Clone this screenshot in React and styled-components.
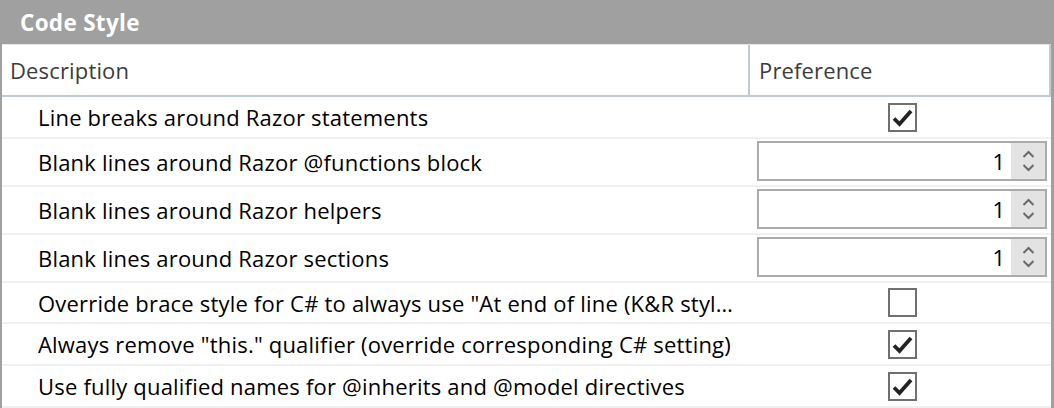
import React from "react";
import styled, { createGlobalStyle } from "styled-components";

const Global = createGlobalStyle`
  html, body { margin: 0; padding: 0; background: #ffffff; }
  body { width: 1054px; height: 408px; overflow: hidden; font-family: "Open Sans", "Noto Sans", sans-serif; }
`;

const Panel = styled.div`
  width: 1054px;
  height: 408px;
  box-sizing: border-box;
  background: #a0a0a0;
  padding: 0 3px 0 2px;
  display: flex;
  flex-direction: column;
  overflow: hidden;
`;

const TitleBar = styled.div`
  height: 44px;
  flex: none;
  display: flex;
  align-items: center;
  padding-left: 18px;
  color: #ffffff;
  font-weight: 700;
  font-size: 22.5px;
  letter-spacing: 0.3px;
`;

const Grid = styled.div`
  flex: 1;
  background: #ffffff;
  display: flex;
  flex-direction: column;
`;

const HeaderRow = styled.div`
  display: grid;
  grid-template-columns: 748px 1fr;
  height: 53px;
  box-sizing: border-box;
  border-top: 1px solid #e6e6e6;
  border-bottom: 2px solid #bfccd4;
  border-right: 2px solid #bfccd4;
`;

const HeaderCell = styled.div`
  display: flex;
  align-items: center;
  padding-left: ${(p) => p.$pad}px;
  color: #3c3c3c;
  font-size: 22px;
  letter-spacing: 0.15px;
  border-right: ${(p) => (p.$divider ? "2px solid #bfccd4" : "none")};
`;

const Row = styled.div`
  display: grid;
  grid-template-columns: 750px 1fr;
  height: ${(p) => p.$h}px;
  box-sizing: border-box;
  border-bottom: 2px solid #f0f0f0;
  flex: none;
`;

const Label = styled.div`
  display: flex;
  align-items: center;
  padding: 0 18px 0 36px;
  min-width: 0;
  font-size: 22px;
  letter-spacing: 0.2px;
  color: #000000;
`;

const LabelText = styled.span`
  white-space: nowrap;
  overflow: hidden;
  text-overflow: ellipsis;
`;

const Pref = styled.div`
  display: flex;
  align-items: center;
  justify-content: ${(p) => (p.$center ? "center" : "flex-start")};
  padding: ${(p) => (p.$center ? "0 0 0 2px" : "0 4px 2px 5px")};
`;

const Box = styled.div`
  width: 25px;
  height: 25px;
  border: 2px solid #707070;
  background: #ffffff;
  display: flex;
  align-items: center;
  justify-content: center;
`;

const Spinner = styled.div`
  flex: 1;
  height: 40px;
  box-sizing: border-box;
  border: 2px solid #ababab;
  display: flex;
  background: #ffffff;
`;

const SpinValue = styled.div`
  flex: 1;
  display: flex;
  align-items: center;
  justify-content: flex-end;
  padding-right: 6px;
  font-size: 22px;
  color: #000000;
`;

const SpinButtons = styled.div`
  width: 34px;
  background: #e3e3e3;
  display: flex;
  flex-direction: column;
  align-items: center;
  justify-content: center;
  gap: 6px;
`;

const Check = () => (
  <svg width="21" height="19" viewBox="0 0 21 19">
    <path d="M2 10.5 L7.5 16 L19 3" fill="none" stroke="#222" strokeWidth="3.8" strokeLinecap="butt" strokeLinejoin="miter" />
  </svg>
);

const Chevron = ({ up }) => (
  <svg width="13" height="8" viewBox="0 0 13 8">
    <path d={up ? "M1.5 7 L6.5 2 L11.5 7" : "M1.5 1 L6.5 6 L11.5 1"} fill="none" stroke="#6a6a6a" strokeWidth="2" />
  </svg>
);

const rows = [
  { label: "Line breaks around Razor statements", type: "check", value: true, h: 42 },
  { label: "Blank lines around Razor @functions block", type: "spin", value: 1, h: 48 },
  { label: "Blank lines around Razor helpers", type: "spin", value: 1, h: 48 },
  { label: "Blank lines around Razor sections", type: "spin", value: 1, h: 48 },
  { label: 'Override brace style for C# to always use "At end of line (K&R style)"', type: "check", value: false, h: 41 },
  { label: 'Always remove "this." qualifier (override corresponding C# setting)', type: "check", value: true, h: 42 },
  { label: "Use fully qualified names for @inherits and @model directives", type: "check", value: true, h: 42 },
];

export default function App() {
  return (
    <>
      <Global />
      <Panel>
        <TitleBar>Code Style</TitleBar>
        <Grid>
          <HeaderRow>
            <HeaderCell $pad={8} $divider>Description</HeaderCell>
            <HeaderCell $pad={9}>Preference</HeaderCell>
          </HeaderRow>
          {rows.map((r) => (
            <Row key={r.label} $h={r.h}>
              <Label>
                <LabelText>{r.label}</LabelText>
              </Label>
              {r.type === "check" ? (
                <Pref $center>
                  <Box>{r.value && <Check />}</Box>
                </Pref>
              ) : (
                <Pref>
                  <Spinner>
                    <SpinValue>{r.value}</SpinValue>
                    <SpinButtons>
                      <Chevron up />
                      <Chevron />
                    </SpinButtons>
                  </Spinner>
                </Pref>
              )}
            </Row>
          ))}
        </Grid>
      </Panel>
    </>
  );
}
